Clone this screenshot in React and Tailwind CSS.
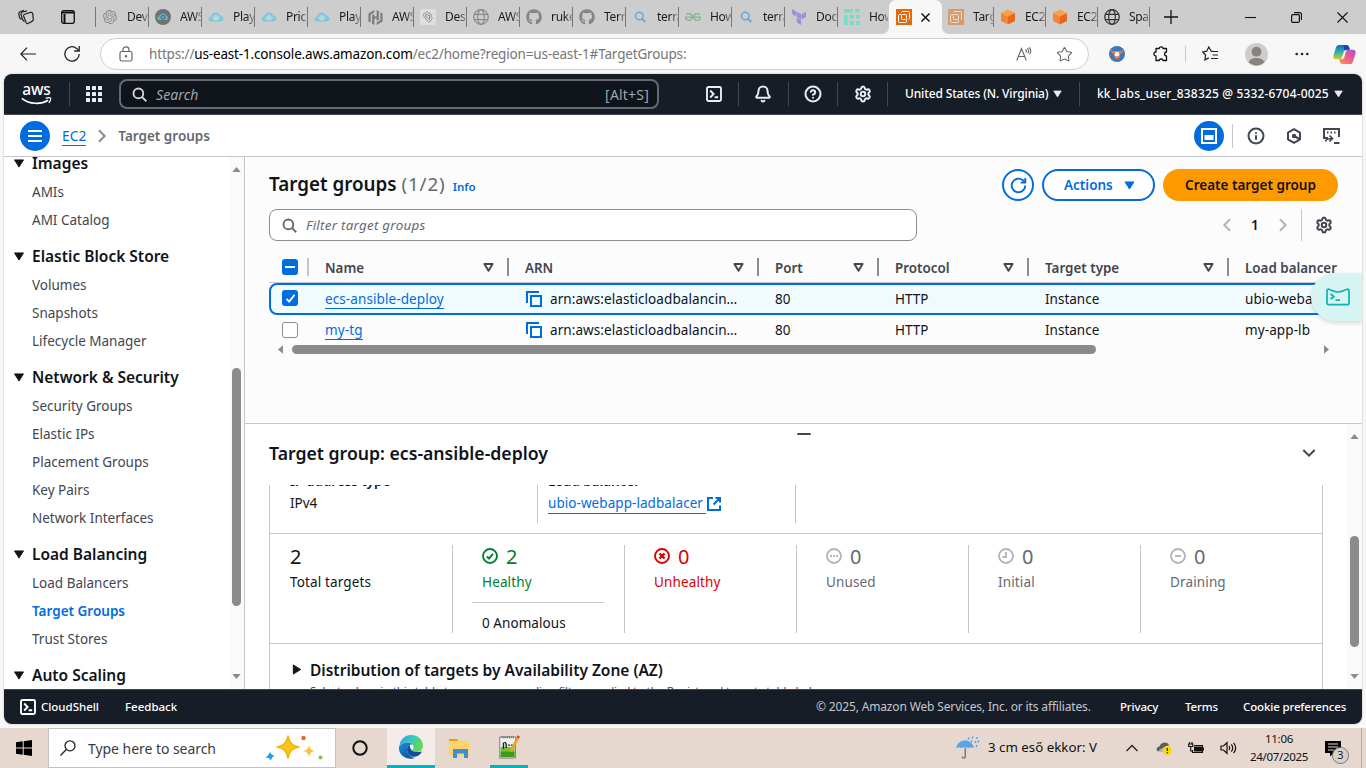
import React from "react";
import { Settings, HelpCircle, Info, Bell, Star } from "lucide-react";
import { FaGithub } from "react-icons/fa";
import { SiOpenai, SiHashicorp, SiTerraform, SiGeeksforgeeks } from "react-icons/si";

const sans = "font-['Noto_Sans','Open_Sans',sans-serif]";

/* ---------- shared icons ---------- */

function Caret({ className = "" }) {
  return (
    <svg viewBox="0 0 12 10" className={`shrink-0 ${className}`} fill="currentColor">
      <path d="M1 1h10L6 9z" stroke="currentColor" strokeWidth="1" strokeLinejoin="round" />
    </svg>
  );
}

function SearchGlyph({ className = "" }) {
  return (
    <svg viewBox="0 0 16 16" className={`shrink-0 ${className}`} fill="none" stroke="currentColor" strokeWidth="2">
      <circle cx="6.8" cy="6.8" r="5.2" />
      <path d="M10.6 10.6l4.6 4.6" />
    </svg>
  );
}

function ShellIcon({ className = "" }) {
  return (
    <svg viewBox="0 0 16 16" className={`shrink-0 ${className}`} fill="none" stroke="currentColor" strokeWidth="1.9">
      <rect x="1" y="1" width="14" height="14" rx="1.5" />
      <path d="M4.2 4.5L7.6 8l-3.4 3.5M8.6 11.3h3.6" />
    </svg>
  );
}

function RefreshIcon({ className = "", sw = 2 }) {
  return (
    <svg viewBox="0 0 18 18" className={`shrink-0 ${className}`} fill="none" stroke="currentColor" strokeWidth={sw}>
      <path d="M16.2 9A7.2 7.2 0 1 1 13.6 3.4L16 5.8" />
      <path d="M16.2 1v5h-5" />
    </svg>
  );
}

function Chevron({ dir = "right", className = "" }) {
  const d = { right: "M4.5 1.5L11 8l-6.5 6.5", left: "M11.5 1.5L5 8l6.500 6.500", down: "M1.5 4.500L8 11l6.500-6.500" }[dir];
  return (
    <svg viewBox="0 0 16 16" className={`shrink-0 ${className}`} fill="none" stroke="currentColor" strokeWidth="2.3">
      <path d={d} />
    </svg>
  );
}

function CopyIcon() {
  return (
    <svg viewBox="0 0 16 16" className="size-4 shrink-0 text-[#006ce0]" fill="none" stroke="currentColor" strokeWidth="2">
      <path d="M1 12V1h12" />
      <rect x="5" y="5" width="10" height="10" />
    </svg>
  );
}

function ScrollArrow({ dir, className = "" }) {
  const d = { up: "M0 6L5 0l5 6z", down: "M0 0h10L5 6z", left: "M6 0v10L0 5z", right: "M0 0l6 5-6 5z" }[dir];
  const horizontal = dir === "left" || dir === "right";
  return (
    <svg viewBox={horizontal ? "0 0 6 10" : "0 0 10 6"} className={`shrink-0 ${horizontal ? "h-[9px] w-[5px]" : "h-[5px] w-[9px]"} ${className}`} fill="#8b8b8b">
      <path d={d} />
    </svg>
  );
}

/* ---------- tab favicons ---------- */

const EyeDark = () => (
  <svg viewBox="0 0 16 16" className="size-4">
    <circle cx="8" cy="8" r="8" fill="#6f7173" />
    <path d="M3.500 11c-1.800-.6-1.500-3.500.500-3.800C5 3.800 10 3.300 11.500 7c2.200.2 2.500 3.200.6 4z" fill="#66aec0" />
    <circle cx="8" cy="8.300" r="1.900" fill="none" stroke="#54616a" strokeWidth="1" />
  </svg>
);
const EyeCloud = () => (
  <svg viewBox="0 0 16 16" className="size-4">
    <path d="M2.500 12.500C-.5 12 .2 8 3 7.600 4 2.500 10.500 2 12.300 6.600c3.700.2 4.300 5 1 5.900z" fill="#86c6da" />
    <path d="M4.500 9c2-3 5-3 7 0-2 2.500-5 2.500-7 0z" fill="none" stroke="#c9e4ec" strokeWidth=".8" />
    <circle cx="8" cy="9" r="1.300" fill="none" stroke="#d6edf2" strokeWidth=".8" />
  </svg>
);
const Globe = ({ c = "#8a8a8a" }) => (
  <svg viewBox="0 0 16 16" className="size-4" fill="none" stroke={c} strokeWidth="1.200">
    <circle cx="8" cy="8" r="7.300" />
    <ellipse cx="8" cy="8" rx="3.300" ry="7.300" />
    <path d="M1.500 5.300h13M1.500 10.700h13" />
  </svg>
);
const Brain = () => (
  <svg viewBox="0 0 16 16" className="size-4">
    <rect width="16" height="16" rx="2" fill="#dedede" />
    <path d="M4 7.500C2.500 6 4 3.500 5.500 4 6.500 2.300 9 3 9 4.500c1.800-.3 3 1.500 2.200 3 1.300 1 1 2.800-.2 3.300 0 1.600-1.500 2.500-2.800 2L4 7.500zM5 6.500l4 4M7 5l3 3M6 4.500v3M9.500 6v5" fill="none" stroke="#8f8f8f" strokeWidth="1" />
  </svg>
);
const Magnifier = () => (
  <svg viewBox="0 0 16 16" className="size-4" fill="none" stroke="#6fa5d2" strokeWidth="1.500">
    <circle cx="7.300" cy="7" r="3.800" />
    <path d="M10 9.800l3.200 3.200" strokeWidth="2" />
  </svg>
);
const Pipes = () => (
  <svg viewBox="0 0 16 16" className="size-4" fill="#76dcc8">
    <path d="M0 0h9v3.500H0zM11 0h4.500v3.500H11zM0 6h3.500v10H0zM5.500 6H10v3.500H5.500zM12 6h4v3.500h-4zM5.500 12H10v4H5.500zM12 12h4v4h-4z" />
  </svg>
);
const Ec2 = ({ faded }) => (
  <svg viewBox="0 0 16 16" className={faded ? "size-4 opacity-50" : "size-4"}>
    <rect width="16" height="16" fill="#e26a0c" />
    <g fill="none" stroke="#fff" strokeWidth="1">
      <path d="M5 5.500H3.500c-.6 0-1 .4-1 1v6c0 .6.400 1 1 1h6c.6 0 1-.4 1-1V11" />
      <rect x="5.500" y="5.500" width="5" height="5" rx="1" />
      <path d="M5.500 3.500c0-.6.400-1 1-1h6c.6 0 1 .4 1 1v6c0 .6-.4 1-1 1" />
    </g>
  </svg>
);
const Cube = () => (
  <svg viewBox="0 0 16 16" className="size-4">
    <path d="M8 .5L15 4 8 7.500 1 4z" fill="#f9a14a" />
    <path d="M1 4l7 3.500v8L1 12z" fill="#f58536" />
    <path d="M15 4L8 7.500v8l7-3.500z" fill="#e8661f" />
  </svg>
);

const leftTabs = [
  ["Dev", <SiOpenai className="size-[14px] text-[#8b8b8b]" />],
  ["AWS", <EyeDark />],
  ["Play", <EyeCloud />],
  ["Pric", <EyeCloud />],
  ["Play", <EyeCloud />],
  ["AWS", <SiHashicorp className="size-[15px] text-[#7c7c7c]" />],
  ["Des", <Brain />],
  ["AWS", <Globe />],
  ["ruke", <FaGithub className="size-4 text-[#858585]" />],
  ["Terr", <FaGithub className="size-4 text-[#858585]" />],
  ["terra", <Magnifier />],
  ["How", <SiGeeksforgeeks className="size-4 text-[#83b78d]" />],
  ["terra", <Magnifier />],
  ["Doc", <SiTerraform className="size-4 text-[#9c8fdb]" />],
  ["How", <Pipes />],
];
const rightTabs = [
  ["Targ", <Ec2 faded />],
  ["EC2", <Cube />],
  ["EC2", <Cube />],
  ["Spac", <Globe c="#333" />],
];

function Tab({ label, icon, width, last }) {
  return (
    <div className={`flex h-5 shrink-0 items-center ${width} ${last ? "" : "border-r border-[#767676]"}`}>
      <span className="ml-[6px] flex size-4 shrink-0 items-center justify-center">{icon}</span>
      <span className="ml-[9px] flex-1 overflow-hidden text-[12px] tracking-[-0.3px] whitespace-nowrap text-[#1b1b1b] [mask-image:linear-gradient(to_right,#000_65%,transparent_115%)]">{label}</span>
    </div>
  );
}

function TabStrip() {
  return (
    <div className="flex h-[34px] shrink-0 bg-[#f7f7f7]">
      <div className="flex w-[889px] items-center rounded-br-[7px] bg-[#cdcdcd]">
        <svg viewBox="0 0 16 16" className="ml-[18px] size-4 shrink-0" fill="none" stroke="#222" strokeWidth="1.200">
          <path d="M6.500 5.200l6-1.800c1.200-.3 2 .2 2.300 1.200l.5 6c0 1-.5 1.500-1.300 1.800L10 14.500c-1 .3-1.700-.1-1.900-1.100L5.600 7c-.2-.9 0-1.500.9-1.800z" />
          <path d="M6.500 12.800L4.800 11 3 5.500C2.700 4 3.200 3.400 4.500 3L9 1.800M3.500 10.500L1.700 9 .8 5.200C.6 3.600 1.200 3 2.500 2.500L6 1.300" />
        </svg>
        <svg viewBox="0 0 14 14" className="mr-[20px] ml-[27px] size-[14px] shrink-0" fill="none" stroke="#111" strokeWidth="1.300">
          <rect x=".7" y=".7" width="12.600" height="12.600" rx="2" />
          <path d="M1 2.500h12M3.500 4v9" strokeWidth="2" />
        </svg>
        <div className="h-5 w-px shrink-0 bg-[#767676]" />
        {leftTabs.map(([label, icon], i) => (
          <Tab key={i} label={label} icon={icon} width={i === 14 ? "w-[50px]" : "w-[53px]"} last={i === 14} />
        ))}
      </div>
      <div className="flex w-[53px] items-center rounded-t-[7px] bg-[#f7f7f7] pl-[7px] shadow-[0_-8px_0_#cdcdcd]">
        <Ec2 />
        <svg viewBox="0 0 10 10" className="ml-[9px] size-[9px]" stroke="#111" strokeWidth="1.600">
          <path d="M.5.5l9 9M9.500.5l-9 9" />
        </svg>
      </div>
      <div className="flex flex-1 items-center rounded-bl-[7px] bg-[#cdcdcd]">
        {rightTabs.map(([label, icon], i) => (
          <Tab key={i} label={label} icon={icon} width="w-[52px]" />
        ))}
        <svg viewBox="0 0 14 14" className="ml-[14px] size-[14px]" stroke="#111" strokeWidth="1.300">
          <path d="M7 0v14M0 7h14" />
        </svg>
        <svg viewBox="0 0 11 11" className="ml-[67px] size-[11px]" stroke="#111" strokeWidth="1.100">
          <path d="M0 5.500h11" />
        </svg>
        <svg viewBox="0 0 11 11" className="ml-[35px] size-[11px]" fill="none" stroke="#111" strokeWidth="1.200">
          <rect x=".6" y="2.600" width="7.800" height="7.800" rx="1.200" />
          <path d="M3 .6h5.500c1.200 0 2 .8 2 2V8" />
        </svg>
        <svg viewBox="0 0 11 11" className="ml-[35px] size-[11px]" stroke="#111" strokeWidth="1.100">
          <path d="M.5.5l10 10M10.500.5l-10 10" />
        </svg>
      </div>
    </div>
  );
}

function Toolbar() {
  return (
    <div className="flex h-10 shrink-0 items-center bg-[#f7f7f7]">
      <svg viewBox="0 0 16 14" className="ml-5 h-[14px] w-4" fill="none" stroke="#222" strokeWidth="1.200">
        <path d="M16 7H.8M7 .7L.8 7 7 13.300" />
      </svg>
      <RefreshIcon className="ml-[27px] size-[18px] text-[#222]" sw={1.3} />
      <div className="ml-[19px] flex h-8 w-[989px] shrink-0 items-center rounded-full border border-[#cfcfd2] bg-white">
        <svg viewBox="0 0 14 16" className="ml-[18px] h-4 w-[14px]" fill="none" stroke="#666" strokeWidth="1.200">
          <rect x="1" y="5.500" width="12" height="9.500" rx="1.800" />
          <path d="M4 5.500V3.700C4 2 5.300.9 7 .9s3 1.100 3 2.800v1.800" />
          <circle cx="7" cy="10.200" r=".6" fill="#666" />
        </svg>
        <span className="ml-4 w-[860px] text-[13.5px] tracking-[-0.16px] whitespace-nowrap text-[#767676]">
          https://<span className="text-black">us-east-1.console.aws.amazon.com</span>/ec2/home?region=us-east-1#TargetGroups:
        </span>
        <svg viewBox="0 0 16 14" className="ml-[7px] h-[14px] w-4 shrink-0" fill="none" stroke="#666" strokeWidth="1.100">
          <path d="M.7 13.500L5.500 1.500l4.800 12M2.500 9.500h6M9.500 2.300c1 .9 1 2.200.4 3.200M11.300 1.200c1.400 1.300 1.500 3.400.5 5M13 .3c2 1.900 2 4.700.7 6.800" />
        </svg>
        <Star className="ml-6 size-[17px] shrink-0 text-[#666]" strokeWidth={1.5} />
      </div>
      <svg viewBox="0 0 16 16" className="ml-5 size-4 shrink-0">
        <circle cx="8" cy="8" r="8" fill="#3d78bd" />
        <path d="M1.500 3.500C4 6 5 5 8 5s4 1 6.500-1.500C14 7.500 11 7 11 9s-1 4-3 4-3-2-3-4-3-1.500-3.500-5.500z" fill="#ef7c3b" />
        <circle cx="8" cy="8.300" r="2.300" fill="#fff" />
      </svg>
      <svg viewBox="0 0 16 16" className="ml-[28px] size-4 shrink-0" fill="none" stroke="#111" strokeWidth="1.300" strokeLinejoin="round">
        <path d="M3 2.500h3.200C6.200.2 10 .2 10 2.500h3.500V6C11 6 11 10 13.500 10v4.500H10c0-2-3.800-2-3.800 0H3V10C.200 10 .200 6 3 6z" />
      </svg>
      <div className="ml-4 h-4 w-px bg-[#c8c8c8]" />
      <svg viewBox="0 0 17 16" className="ml-4 h-4 w-[17px] shrink-0" fill="none" stroke="#222" strokeWidth="1.200">
        <path d="M10.500 5L9 5 6.800 1 4.700 5.200.6 5.900l3 3.100-.7 4.900 3.900-2" />
        <path d="M9.500 5.500H16M10.500 9H16M9 12.500h7" />
      </svg>
      <svg viewBox="0 0 22 22" className="ml-[26px] size-[23px] shrink-0">
        <circle cx="11" cy="11" r="11" fill="#cfcdcb" />
        <circle cx="11" cy="8.300" r="4.700" fill="#87837f" />
        <path d="M3.500 18.500C5 13 17 13 18.500 18.500c-4 4-11 4-15 0z" fill="#87837f" />
      </svg>
      <svg viewBox="0 0 14 4" className="ml-[27px] h-1 w-[14px] shrink-0" fill="#222">
        <circle cx="1.700" cy="2" r="1.300" /><circle cx="7" cy="2" r="1.300" /><circle cx="12.300" cy="2" r="1.300" />
      </svg>
      <svg viewBox="0 0 24 22" className="ml-6 h-[21px] w-[23px] shrink-0">
        <defs>
          <linearGradient id="cpA" x1="0" y1="0" x2="0" y2="1"><stop stopColor="#1668c7" /><stop offset=".5" stopColor="#2bb5a5" /><stop offset="1" stopColor="#e8c52a" /></linearGradient>
          <linearGradient id="cpB" x1="1" y1="0" x2="0" y2="1"><stop stopColor="#a44de8" /><stop offset=".5" stopColor="#ef5c8a" /><stop offset="1" stopColor="#f99b4a" /></linearGradient>
        </defs>
        <path d="M6 1h8c2 0 2.500 1.500 3 3l.5 2h-3c-2 0-3 1-3.500 3l-1.500 5c-.5 1.500-1 2-2.500 2H3C0 16 0 13 .7 11L3 4c.7-2 1.500-3 3-3z" fill="url(#cpA)" />
        <path d="M18 21h-8c-2 0-2.500-1.500-3-3l-.5-2h2c2 0 3-1 3.500-3l1.500-5c.5-1.500 1-2 2.500-2H21c3 0 3 3 2.300 5L21 18c-.7 2-1.500 3-3 3z" fill="url(#cpB)" />
        <path d="M14 1c2 0 2.500 1.500 3 3l.5 2h-3c-1 0-1.800.4-2.400 1L11 1z" fill="#1547b0" />
      </svg>
    </div>
  );
}

function AwsLogo() {
  return (
    <div className="ml-[17px] flex w-[31px] flex-col items-center">
      <span className="text-[15.5px] leading-[11px] font-medium tracking-[-0.2px] text-white">aws</span>
      <svg viewBox="0 0 32 8" className="mt-[2px] h-[8px] w-[31px]" fill="none" stroke="#fff" strokeWidth="1.700">
        <path d="M.8 1.200C9 7.500 20 8 28 3.200" />
        <path d="M25.500 1.300c2-.8 4-.8 5-.4.300 1.500-.5 3.700-1.800 5.200" strokeWidth="1.300" />
      </svg>
    </div>
  );
}

function TopNav() {
  const sep = "h-6 w-px shrink-0 bg-[#424650]";
  return (
    <div className="flex h-[41px] shrink-0 items-center border-b border-[#424650] bg-[#161d26] text-[#ebebf0]">
      <AwsLogo />
      <div className={`${sep} ml-[17px]`} />
      <svg viewBox="0 0 16 16" className="ml-4 size-4" fill="currentColor">
        {[0, 6, 12].map((y) => [0, 6, 12].map((x) => <rect key={`${x}-${y}`} x={x} y={y} width="4" height="4" rx=".5" />))}
      </svg>
      <div className="ml-[17px] flex h-[30px] w-[540px] items-center rounded-[8px] border-2 border-[#656871] bg-[#0f141a] pr-[8px] pl-[11px]">
        <SearchGlyph className="size-[15px] text-[#d5d5dc]" />
        <span className="ml-[9px] flex-1 text-[14px] tracking-[0.1px] text-[#a4a4ad] italic">Search</span>
        <span className="text-[14px] tracking-[0.2px] text-[#a4a4ad]">[Alt+S]</span>
      </div>
      <ShellIcon className="ml-[47px] size-4" />
      <div className={`${sep} ml-4`} />
      <Bell className="ml-[15px] size-[18px]" strokeWidth={2.700} />
      <div className={`${sep} ml-4`} />
      <HelpCircle className="ml-[15px] size-[18px]" strokeWidth={2.700} />
      <div className={`${sep} ml-[15px]`} />
      <Settings className="ml-4 size-[18px]" strokeWidth={2.700} />
      <div className={`${sep} ml-[15px]`} />
      <span className="ml-[17px] w-[143px] text-[12px] font-medium tracking-[-0.14px] whitespace-nowrap text-white">United States (N. Virginia)</span>
      <Caret className="ml-[5px] h-[8px] w-[9px]" />
      <div className={`${sep} ml-[17px]`} />
      <span className="ml-[17px] w-[232px] text-[12px] font-medium tracking-[0.16px] whitespace-nowrap text-white">kk_labs_user_838325 @ 5332-6704-0025</span>
      <Caret className="ml-[5px] h-[8px] w-[9px]" />
    </div>
  );
}

function Breadcrumbs() {
  return (
    <div className="flex h-[42px] shrink-0 items-center border-b border-[#c6c6cd] bg-white">
      <div className="ml-4 flex size-[30px] items-center justify-center rounded-full bg-[#006ce0]">
        <svg viewBox="0 0 14 12" className="h-3 w-[14px]" fill="#fff"><path d="M0 0h14v2H0zM0 5h14v2H0zM0 10h14v2H0z" /></svg>
      </div>
      <span className="mt-[2px] ml-3 border-b border-[#006ce0] text-[13.8px] leading-[18px] text-[#006ce0]">EC2</span>
      <Chevron className="ml-[9px] size-[14px] text-[#8c8c94]" />
      <span className="mt-[2px] ml-[9px] flex-1 text-[13.5px] font-semibold text-[#656871]">Target groups</span>
      <div className="flex size-[30px] items-center justify-center rounded-full bg-[#006ce0]">
        <svg viewBox="0 0 16 16" className="size-4" fill="none" stroke="#fff" strokeWidth="2"><rect x="1" y="1" width="14" height="14" /><path d="M3.500 7h9v5h-9z" fill="#fff" stroke="none" /></svg>
      </div>
      <div className="ml-2 h-6 w-px bg-[#c6c6cd]" />
      <Info className="ml-[14px] size-[18px] text-[#424650]" strokeWidth={2.700} />
      <svg viewBox="0 0 16 16" className="ml-[21px] size-4 text-[#424650]" fill="none" stroke="currentColor" strokeWidth="2">
        <path d="M8 1.200l6 3.400v6.800l-6 3.400-6-3.400V4.600z" strokeLinejoin="round" />
        <circle cx="8" cy="8" r="2.200" fill="currentColor" stroke="none" /><path d="M8 8l5.500 3" />
      </svg>
      <svg viewBox="0 0 17 16" className="mr-[22px] ml-[21px] h-4 w-[17px] text-[#424650]" fill="none" stroke="currentColor" strokeWidth="2">
        <path d="M5 10H1V1h15v8" /><path d="M4 4.500h1.500M7.500 4.500H9M11 4.500h1.500" /><path d="M2.500 13.500C3 11 5 10.500 9 10.500M6.500 7.500l3 3-3 3" strokeWidth="1.700" /><path d="M11 15h5.500" />
      </svg>
    </div>
  );
}

const nav = [
  ["Images", ["AMIs", "AMI Catalog"]],
  ["Elastic Block Store", ["Volumes", "Snapshots", "Lifecycle Manager"]],
  ["Network & Security", ["Security Groups", "Elastic IPs", "Placement Groups", "Key Pairs", "Network Interfaces"]],
  ["Load Balancing", ["Load Balancers", "Target Groups", "Trust Stores"]],
  ["Auto Scaling", []],
];

function Sidebar() {
  return (
    <div className="flex w-[241px] shrink-0 border-r border-[#c6c6cd] bg-white">
      <div className="flex-1 overflow-hidden">
        <div className="-mt-2 flex flex-col gap-2">
          {nav.map(([title, items]) => (
            <div key={title}>
              <div className="flex h-[29px] items-center pl-[9px] text-[#0f141a]">
                <Caret className="h-[9px] w-[12px]" />
                <span className="ml-[7px] text-[15.5px] font-semibold">{title}</span>
              </div>
              {items.map((item) => (
                <div key={item} className={`flex h-7 items-center pl-7 text-[13.5px] ${item === "Target Groups" ? "font-semibold text-[#006ce0]" : "text-[#424650]"}`}>{item}</div>
              ))}
            </div>
          ))}
        </div>
      </div>
      <div className="flex w-[15px] flex-col items-center bg-[#fafafa] pt-[10px] pb-[10px]">
        <ScrollArrow dir="up" />
        <div className="mt-[196px] h-[238px] w-[9px] rounded-full bg-[#8b8b8b]" />
        <div className="flex-1" />
        <ScrollArrow dir="down" />
      </div>
    </div>
  );
}

function HeadCell({ label, width, last }) {
  return (
    <div className={`flex shrink-0 items-center ${width} pl-4`}>
      <span className="mt-[2px] flex-1 text-[13.4px] font-semibold whitespace-nowrap text-[#424650]">{label}</span>
      {!last && (
        <>
          <svg viewBox="0 0 12 10" className="mt-[2px] mr-[13px] h-[9px] w-[11px]" fill="none" stroke="#424650" strokeWidth="2.200" strokeLinejoin="round"><path d="M1.500 1.200h9L6 8.500z" /></svg>
          <div className="h-[18px] w-[2px] bg-[#8c8c94]" />
        </>
      )}
    </div>
  );
}

function Row({ name, lb, selected }) {
  const cell = "shrink-0 whitespace-nowrap pl-4";
  return (
    <div className={`flex w-[1200px] items-center text-[13.5px] text-[#0f141a] ${selected ? "h-8 rounded-[8px] border-2 border-[#006ce0] bg-[#f0fbff]" : "h-[30px] border-l-2 border-transparent"}`}>
      <div className="flex w-[38px] shrink-0 items-center pl-[11px]">
        {selected ? (
          <span className="mb-[2px] flex size-4 items-center justify-center rounded-[3px] bg-[#006ce0]">
            <svg viewBox="0 0 12 10" className="h-[9px] w-[11px]" fill="none" stroke="#fff" strokeWidth="2"><path d="M1.500 5.500l3 3L10.500 1" /></svg>
          </span>
        ) : (
          <span className="size-4 rounded-[3px] border border-[#8c8c94] bg-white" />
        )}
      </div>
      <div className={`w-[200px] ${cell}`}><span className="inline-block border-b border-[#006ce0] leading-[18px] tracking-[0.1px] text-[#006ce0]">{name}</span></div>
      <div className={`flex w-[250px] items-center gap-2 ${cell} pl-[17px]`}><CopyIcon /><span className="tracking-[0.08px]">arn:aws:elasticloadbalancin…</span></div>
      <div className={`w-[120px] ${cell}`}>80</div>
      <div className={`w-[150px] ${cell}`}>HTTP</div>
      <div className={`w-[200px] ${cell}`}>Instance</div>
      <div className={`tracking-[0.1px] ${cell}`}>{lb}</div>
    </div>
  );
}

function TargetTable() {
  return (
    <div className="flex h-[266px] shrink-0 flex-col bg-[#fcfcfd] pt-3 pl-6">
      <div className="flex h-8 items-center pr-6">
        <h1 className="-mt-[2px] text-[18.8px] font-semibold whitespace-nowrap text-[#0f141a]">Target groups <span className="font-normal tracking-[0.9px] text-[#656871]">(1/2)</span></h1>
        <span className="mt-1 ml-[7px] flex-1 text-[11.5px] font-semibold text-[#006ce0]">Info</span>
        <button className="flex size-8 items-center justify-center rounded-full border-2 border-[#006ce0] bg-white text-[#006ce0]"><RefreshIcon className="size-[17px]" /></button>
        <button className="ml-2 flex h-8 w-[113px] items-center rounded-full border-2 border-[#006ce0] bg-white pl-5 text-[13.5px] font-semibold text-[#006ce0]">Actions<Caret className="ml-[11px] h-[9px] w-[11px]" /></button>
        <button className="ml-2 flex h-8 w-[175px] items-center justify-center rounded-full bg-[#ff9900] text-[13.5px] font-semibold whitespace-nowrap text-[#0f141a]">Create target group</button>
      </div>
      <div className="mt-2 flex h-8 items-center pr-6">
        <div className="flex h-8 w-[648px] items-center rounded-[8px] border border-[#8c8c94] bg-white pl-3">
          <SearchGlyph className="size-[15px] text-[#656871]" />
          <span className="mt-px ml-[9px] text-[13.4px] tracking-[0.25px] text-[#656871] italic">Filter target groups</span>
        </div>
        <div className="flex-1" />
        <Chevron dir="left" className="size-[14px] text-[#b4b4bb]" />
        <span className="mx-[17px] w-[8px] text-[13.5px] font-semibold text-[#0f141a]">1</span>
        <Chevron className="size-[14px] text-[#b4b4bb]" />
        <div className="ml-[11px] h-8 w-px bg-[#c6c6cd]" />
        <Settings className="mr-[5px] ml-[13px] size-[18px] text-[#424650]" strokeWidth={2.700} />
      </div>
      <div className="mr-6 overflow-hidden">
        <div className="mt-[11px] flex h-[31px] items-center border-b border-[#c6c6cd]">
          <div className="flex w-10 shrink-0 items-center pl-[13px]">
            <span className="flex size-4 items-center justify-center rounded-[3px] bg-[#006ce0]"><span className="h-[2px] w-[10px] bg-white" /></span>
            <div className="ml-[9px] h-[18px] w-[2px] bg-[#c6c6cd]" />
          </div>
          <HeadCell label="Name" width="w-[200px]" />
          <HeadCell label="ARN" width="w-[250px]" />
          <HeadCell label="Port" width="w-[120px]" />
          <HeadCell label="Protocol" width="w-[150px]" />
          <HeadCell label="Target type" width="w-[200px]" />
          <HeadCell label="Load balancer" width="w-[140px]" last />
        </div>
        <Row name="ecs-ansible-deploy" lb="ubio-webapp-ladbalacer" selected />
        <Row name="my-tg" lb="my-app-lb" />
        <div className="flex h-[9px] items-center pl-[9px]">
          <ScrollArrow dir="left" />
          <div className="ml-[9px] h-[9px] w-[804px] rounded-full bg-[#8b8b8b]" />
          <ScrollArrow dir="right" className="ml-[228px]" />
        </div>
      </div>
    </div>
  );
}

const ring = <circle cx="8" cy="8" r="7" />;
const stats = [
  { n: 2, label: "Total targets", tone: "text-[#0f141a]" },
  { n: 2, label: "Healthy", tone: "text-[#00802f]", icon: <>{ring}<path d="M4.800 8.300l2.200 2.200 4-4.700" /></>, extra: "0 Anomalous" },
  { n: 0, label: "Unhealthy", tone: "text-[#db0000]", icon: <>{ring}<path d="M5.500 5.500l5 5M10.500 5.500l-5 5" strokeWidth="2.400" /></> },
  { n: 0, label: "Unused", tone: "text-[#656871]", gray: true, icon: <>{ring}<path d="M4 8h2M7 8h2M10 8h2" /></> },
  { n: 0, label: "Initial", tone: "text-[#656871]", gray: true, icon: <>{ring}<path d="M8 4v5H4.500" /></> },
  { n: 0, label: "Draining", tone: "text-[#656871]", gray: true, icon: <>{ring}<path d="M5 8h6" /></> },
];

function Stat({ n, label, tone, icon, gray, extra, first, last }) {
  return (
    <div className={`flex h-[88px] shrink-0 flex-col ${first ? "w-[183px] pl-5" : "w-[172px] pl-[29px]"} ${last ? "" : "border-r border-[#c6c6cd]"} ${tone}`}>
      <div className="flex h-6 items-center">
        {icon && <svg viewBox="0 0 16 16" className={`mr-2 mb-[2px] size-4 ${gray ? "text-[#b4b4bb]" : ""}`} fill="none" stroke="currentColor" strokeWidth="1.900">{icon}</svg>}
        <span className="text-[20px] leading-6">{n}</span>
      </div>
      <span className="mt-[3px] text-[13.500px] leading-5 tracking-[0.14px]">{label}</span>
      {extra && (
        <div className="mt-[10px] mr-5 -ml-[10px] border-t border-[#c6c6cd] pt-[10px] pl-[10px] text-[13.500px] leading-5 tracking-[0.06px] text-[#0f141a]">{extra}</div>
      )}
    </div>
  );
}

function DetailPanel() {
  return (
    <div className="flex flex-1 overflow-hidden border-t border-[#c6c6cd] bg-white">
      <div className="flex w-[1102px] shrink-0 flex-col pl-6">
        <div className="flex h-[61px] shrink-0 flex-col">
          <div className="mt-[9px] ml-[528px] h-[2px] w-[14px] rounded bg-[#424650]" />
          <div className="mt-[6px] flex h-6 items-center pr-[31px]">
            <h2 className="flex-1 text-[17.650px] font-semibold text-[#0f141a]">Target group: ecs-ansible-deploy</h2>
            <Chevron dir="down" className="size-[14px] text-[#424650]" />
          </div>
        </div>
        <div className="mr-[24px] flex-1 overflow-hidden border-x border-[#c6c6cd]">
          <div className="-mt-[14px] flex h-[63px] border-b border-[#c6c6cd] pb-[10px] text-[13.500px] leading-5 text-[#0f141a]">
            <div className="flex w-[268px] flex-col border-r border-[#c6c6cd] pl-5">
              <span className="text-[13.400px] font-semibold">IP address type</span>
              <span className="mt-[2px]">IPv4</span>
            </div>
            <div className="flex w-[258px] flex-col border-r border-[#c6c6cd] pl-[10px]">
              <span className="text-[13.400px] font-semibold">Load balancer</span>
              <span className="mt-[2px] flex items-center text-[#006ce0]">
                <span className="mt-px border-b border-[#006ce0] pr-[3px] leading-[19px] tracking-[0.06px]">ubio-webapp-ladbalacer</span>
                <svg viewBox="0 0 14 14" className="ml-px size-[14px]" fill="none" stroke="currentColor" strokeWidth="2"><path d="M6 1H1v12h12V8.500M8.500 1H13v4.500M13 1L6.500 7.500" /></svg>
              </span>
            </div>
          </div>
          <div className="flex h-[110px] border-b border-[#c6c6cd] pt-[11px]">
            {stats.map((s, i) => <Stat key={s.label} {...s} first={i === 0} last={i === 5} />)}
          </div>
          <div className="flex pt-[15px] pl-[22px]">
            <svg viewBox="0 0 10 12" className="mt-[5px] h-[11px] w-[10px]" fill="#0f141a"><path d="M1 1l8 5-8 5z" stroke="#0f141a" strokeLinejoin="round" /></svg>
            <div className="ml-2">
              <h3 className="text-[15.500px] leading-[22px] font-semibold whitespace-nowrap text-[#0f141a]">Distribution of targets by Availability Zone (AZ)</h3>
              <p className="mt-[2px] text-[11.500px] leading-4 tracking-[-0.15px] whitespace-nowrap text-[#424650]">Select values in this table to see corresponding filters applied to the Registered targets table below.</p>
            </div>
          </div>
        </div>
      </div>
      <div className="flex flex-1 flex-col items-center bg-[#fafafa] pt-[10px] pb-[10px]">
        <ScrollArrow dir="up" />
        <div className="mt-[97px] h-[111px] w-[9px] rounded-full bg-[#8b8b8b]" />
        <div className="flex-1" />
        <ScrollArrow dir="down" />
      </div>
    </div>
  );
}

function ConsoleFooter() {
  return (
    <div className="flex h-[35px] shrink-0 items-center border-t border-[#424650] bg-[#161d26] px-4 text-[11.500px] font-medium whitespace-nowrap text-white">
      <ShellIcon className="size-4" />
      <span className="ml-[5px] w-[84px] tracking-[-0.02px]">CloudShell</span>
      <span className="flex-1">Feedback</span>
      <span className="w-[304px] text-[12px] font-normal tracking-[-0.15px] text-[#c6c6cd]">© 2025, Amazon Web Services, Inc. or its affiliates.</span>
      <span className="w-[65px] tracking-[-0.150px]">Privacy</span>
      <span className="w-[58px] tracking-[-0.150px]">Terms</span>
      <span className="w-[103px] tracking-[-0.150px]">Cookie preferences</span>
    </div>
  );
}

function Taskbar() {
  return (
    <div className="flex h-10 shrink-0 items-center bg-[#e6d7cf]">
      <svg viewBox="0 0 16 16" className="mx-4 size-4 shrink-0" fill="#000"><path d="M0 2.300L6.700 1.300v6.300H0zM7.700 1.200L16 0v7.600H7.700zM0 8.500h6.700v6.300L0 13.800zM7.700 8.500H16V16l-8.300-1.200z" /></svg>
      <div className="flex h-10 w-[288px] items-center border border-[#c2c2c2] bg-white pl-[11px]">
        <svg viewBox="0 0 16 16" className="size-4" fill="none" stroke="#222" strokeWidth="1.300"><circle cx="10" cy="5.800" r="5" /><path d="M6.300 9.500L.5 15.500" /></svg>
        <span className="ml-[12px] w-[165px] text-[14px] tracking-[-0.050px] whitespace-nowrap text-[#3b3b3b]">Type here to search</span>
        <svg viewBox="0 0 60 26" className="ml-[12px] h-[26px] w-[60px]">
          <path d="M23 1c1.500 7 4 9.500 11 11-7 1.500-9.500 4-11 11-1.500-7-4-9.500-11-11C19 10.500 21.500 8 23 1z" fill="#fcc419" stroke="#f2b212" strokeWidth="1.500" strokeLinejoin="round" />
          <path d="M44 10c.8 3.700 2 5 5.500 6-3.500 1-4.700 2.300-5.500 6-.8-3.700-2-5-5.500-6 3.500-1 4.700-2.300 5.500-6z" fill="#fbc33a" />
          <path d="M5 17l1.500 2.500 3 1.500-2.500 1.500L6 25.500 3.800 23 .5 22.500 3 20.500z" fill="#18a0e8" />
          <circle cx="38.500" cy="3" r="2.200" fill="#f0622d" /><circle cx="55.500" cy="22.500" r="2" fill="#83c341" />
        </svg>
      </div>
      <svg viewBox="0 0 16 16" className="ml-4 size-4 shrink-0" fill="none" stroke="#111" strokeWidth="2"><circle cx="8" cy="8" r="6.700" /></svg>
      <div className="ml-[19px] flex h-10 w-12 items-center justify-center border-b-[3px] border-[#00b4c4] bg-[#f3ece8] pt-px">
        <svg viewBox="0 0 24 24" className="size-6">
          <defs>
            <linearGradient id="edA" x1="0" y1="0" x2="1" y2=".4"><stop stopColor="#2aa5e6" /><stop offset=".55" stopColor="#35c8c0" /><stop offset="1" stopColor="#66d84d" /></linearGradient>
            <linearGradient id="edB" x1="0" y1="0" x2=".8" y2="1"><stop stopColor="#1b8fdc" /><stop offset="1" stopColor="#0c4f9c" /></linearGradient>
          </defs>
          <path d="M.3 11C1 4.500 6 0 12 0c7 0 12 5 12 10.500 0 4-3 6.500-6.500 6.500-2 0-4-.7-4-1.800 0-.7 1-1.200 1-3C14.500 9.500 12 7.500 9 7.500 5 7.500 1.500 9 .3 11z" fill="url(#edA)" />
          <path d="M.2 11.500C1.500 9 5 7.500 8.500 7.500c2 0 4 .8 5 2-3.500-.5-5.500 2-5.500 5 0 5 4.500 8.500 8.500 8.300C11 25.500 0 23-.2 12.500z" fill="url(#edB)" />
          <path d="M8 14.500c0-2 1-4 2.800-4.800-.6 5.800 5 8.800 11.200 6.800.7-.2 1 .2.600.7C18.500 24 8.500 23.500 8 14.500z" fill="#124f96" />
        </svg>
      </div>
      <svg viewBox="0 0 22 20" className="ml-[14px] h-5 w-[22px]">
        <path d="M0 1h8l2 2.500H0z" fill="#dfa21b" /><path d="M0 3h20v15H0z" fill="#ffd466" /><path d="M4 11h15v9h-4v-4.500H8V20H4z" fill="#3b8fd9" />
      </svg>
      <div className="ml-[19px] flex h-10 w-[38px] items-center justify-center border-b-[3px] border-[#00b4c4]">
        <svg viewBox="0 0 24 26" className="size-6">
          <path d="M2 2h17v23H2z" fill="#eef3ea" stroke="#777" /><path d="M3 13h15v11H3z" fill="#77c32a" /><path d="M3 18h15v6H3z" fill="#3f9b1b" />
          <path d="M4 2.500h14" stroke="#555" strokeWidth="2" strokeDasharray="1 1" />
          <path d="M6 8v7M7 8c2 0 2 1 2 3v3" stroke="#222" strokeWidth="1.500" fill="none" /><path d="M11 11h2M14 11h2" stroke="#222" strokeWidth="1.300" />
          <path d="M22 2l-8 16" stroke="#e7a52b" strokeWidth="3" /><path d="M22.500 1l-1 2" stroke="#c84b3b" strokeWidth="3" />
        </svg>
      </div>
      <div className="flex-1" />
      <svg viewBox="0 0 24 24" className="size-6">
        <path d="M0 12C1 7 5 4.500 9 4.500s8 2.500 9 7.500z" fill="#55a6e6" />
        <path d="M0 12c1-1.500 4-1.500 5 0 1-1.200 6-1.200 7.500 0 1-1.500 4.500-1.500 5.500 0" fill="#8cc6f2" />
        <path d="M9.300 12v8.500c0 2-3 2-3.200 0" fill="none" stroke="#777" strokeWidth="1.500" />
        <path d="M13 1.500l-1 2M17 .5l-1 2M21.500 1l-1 2M16 4.500l-1 2M20 5l-1 2M23 4.500l-1 2M21 9l-1 2" stroke="#4b9be0" strokeWidth="1.300" />
      </svg>
      <span className="ml-2 w-[109px] text-[13.300px] whitespace-nowrap text-[#111]">3 cm eső ekkor: V</span>
      <svg viewBox="0 0 12 8" className="ml-[29px] h-[8px] w-3" fill="none" stroke="#222" strokeWidth="1.300"><path d="M.5 7L6 1.500 11.500 7" /></svg>
      <svg viewBox="0 0 16 14" className="ml-[18px] h-[14px] w-4">
        <path d="M2.500 10.500C-1 9 1 5.500 3.500 5.500 5 .5 12 .5 13 4L6 7.500z" fill="#5d5d5d" /><path d="M3 10.500C2 8 7 8 13 4.500l1.500 2-6 4.500H4z" fill="#b5b5b5" />
        <circle cx="11.300" cy="9.500" r="4.500" fill="#f6dc00" /><path d="M11.300 7v3M11.300 11v1.200" stroke="#222" strokeWidth="1.200" />
      </svg>
      <svg viewBox="0 0 16 12" className="ml-4 h-3 w-4" fill="none" stroke="#111" strokeWidth="1.100"><path d="M6 3.500h8.500v7H4.500V8" /><path d="M6.500 5h7v4h-7z" fill="#111" /><path d="M15.500 5.500v3M1.500 0v2M4 0v2M.7 2h4v2.500h-4zM2.700 4.500V9H4.500" /></svg>
      <svg viewBox="0 0 17 14" className="ml-4 h-[14px] w-[17px]" fill="none" stroke="#111" strokeWidth="1.200"><path d="M1 5h2.500L7 1.700v10.600L3.500 9H1zM9 5c.8 1.200.8 2.800 0 4M11.300 3.300c1.700 2.200 1.700 5.200 0 7.400M13.600 1.800c2.600 3.200 2.600 7.200 0 10.400" /></svg>
      <div className="ml-[12px] flex w-[60px] flex-col items-center text-[11.500px] leading-[18px] tracking-[-0.3px] text-[#111]">
        <span>11:06</span><span>24/07/2025</span>
      </div>
      <div className="relative mr-[10px] ml-4 flex w-[26px]">
        <svg viewBox="0 0 17 17" className="size-[17px]"><path d="M0 1h16v12H9l-4 3.500V13H0z" fill="#000" /><path d="M3 4h10M3 7h10M3 10h6" stroke="#e6d7cf" strokeWidth="1.100" /></svg>
        <span className="absolute top-[7px] left-[7px] flex size-[17px] items-center justify-center rounded-full border border-[#777] bg-[#d8d2cd] text-[11px] text-[#222]">3</span>
      </div>
      <div className="mr-1 h-10 w-px bg-[#b3a8a2]" />
    </div>
  );
}

export default function App() {
  return (
    <div className={`flex h-[768px] w-[1366px] flex-col overflow-hidden bg-[#f7f7f7] ${sans}`}>
      <TabStrip />
      <Toolbar />
      <div className="relative mx-1 mb-1 flex h-[650px] w-[1358px] shrink-0 flex-col overflow-hidden rounded-[8px] shadow-[0_0_2px_rgba(0,0,0,0.3)]">
        <TopNav />
        <Breadcrumbs />
        <div className="flex h-[532px] shrink-0 overflow-hidden">
          <Sidebar />
          <div className="flex flex-1 flex-col overflow-hidden">
            <TargetTable />
            <DetailPanel />
          </div>
        </div>
        <ConsoleFooter />
        <div className="absolute top-[199px] right-0 flex h-12 w-[51px] items-center rounded-l-full bg-[#d5f4f2] pl-[15px] shadow-[0_2px_4px_rgba(0,0,0,0.15)]">
          <svg viewBox="0 0 24 18" className="h-[18px] w-6" fill="none" stroke="#0fb3b0" strokeWidth="1.700" strokeLinejoin="round">
            <path d="M1 2.500c0-1 .8-1.500 1.800-1.300C6 2 8 4 12 4s6-2 9.200-2.800C22.200 1 23 1.500 23 2.500V15c0 1-.6 1.700-1.600 1.700H2.600C1.600 16.700 1 16 1 15z" />
            <path d="M4.500 6l3.500 2.500L4.500 11M9.500 12.200H14" />
          </svg>
        </div>
      </div>
      <Taskbar />
    </div>
  );
}
